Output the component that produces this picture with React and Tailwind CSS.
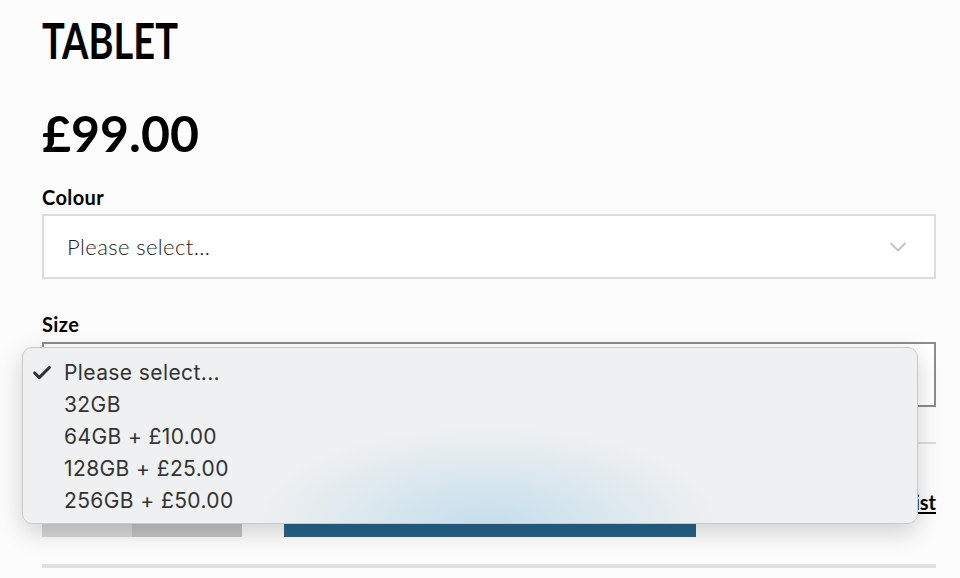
import { ChevronDown, Check } from 'lucide-react';

const SIZES = ['Please select...', '32GB', '64GB + £10.00', '128GB + £25.00', '256GB + £50.00'];

export default function App() {
  return (
    <div className="relative min-h-[578px] overflow-hidden bg-[#fcfcfc] pl-[42px] pr-[24px] font-['Lato',sans-serif] text-black">
      {/* Titulo + precio */}
      <h1 className="pt-[15px] text-[50px] font-bold leading-[50px]">
        <span className="inline-block origin-left scale-x-[0.76]">TABLET</span>
      </h1>
      <p className="mt-[43px] text-[50px] font-bold leading-[50px]">£99.00</p>

      {/* Colour */}
      <label className="mt-[27px] block text-[20px] font-bold leading-[24px] tracking-[0.4px]">Colour</label>
      <div className="mt-[5px] flex h-[65px] items-center justify-between border-2 border-[#dcdcdc] bg-white pl-[23px] pr-[22px]">
        <span className="text-[22px] font-light tracking-[0.4px] text-[#222]">Please select...</span>
        <ChevronDown size={28} strokeWidth={1.6} className="text-[#c4c4c4]" />
      </div>

      {/* Size */}
      <label className="mt-[33px] block text-[20px] font-bold leading-[24px] tracking-[0.4px]">Size</label>
      <div className="relative mt-[6px]">
        <div className="flex h-[65px] items-center justify-between border-2 border-[#8c8c8c] bg-white pl-[23px] pr-[22px]">
          <span className="text-[22px] font-light tracking-[0.4px] text-[#222]">Please select...</span>
          <ChevronDown size={28} strokeWidth={1.6} className="text-[#c4c4c4]" />
        </div>

        {/* Menu desplegable */}
        <div className="absolute left-[-20px] top-[5px] z-10 h-[177px] w-[896px] overflow-hidden rounded-[10px] border border-[#c9c9c9] bg-[radial-gradient(ellipse_230px_95px_at_52%_100%,#c6deec,#eef0f1)] pt-[9px] font-['Inter','Noto_Sans',sans-serif] text-[21px] text-[#333] shadow-[0_8px_24px_rgba(0,0,0,0.18)]">
          {SIZES.map((s, i) => (
            <div key={s} className="flex h-[32px] items-center">
              <span className="flex w-[41px] justify-start pl-[8px]">
                {i === 0 && <Check size={22} strokeWidth={3.4} className="text-[#333]" />}
              </span>
              <span className="tracking-[0.4px]">{s}</span>
            </div>
          ))}
        </div>
      </div>

      <div className="mt-[35px] h-[2px] bg-[#dedede]" />

      {/* Cantidad + boton */}
      <div className="mt-[26px] flex h-[67px] items-end">
        <div className="flex h-full w-[200px]">
          <div className="w-[90px] bg-[#d8d8d8]" />
          <div className="w-[110px] bg-[#c4c4c4]" />
        </div>
        <div className="ml-[42px] h-full w-[412px] bg-[#26648a]" />
        <a className="mb-[20px] ml-auto text-[20px] font-bold text-black underline underline-offset-2">
          Add to wishlist
        </a>
      </div>

      <div className="mt-[27px] h-[4px] bg-[#e0e0e0]" />
    </div>
  );
}
